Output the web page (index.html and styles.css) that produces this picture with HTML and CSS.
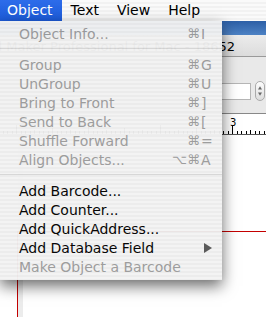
FILE: index.html
```html
<!DOCTYPE html>
<html lang="en">
<head>
    <meta charset="UTF-8">
    <meta name="viewport" content="width=device-width, initial-scale=1.0">
    <title>Object Menu</title>
    <link rel="stylesheet" href="styles.css">
</head>
<body>
    <!-- Menu bar -->
    <div class="menubar">
        <span class="menubar-item first active">Object</span>
        <span class="menubar-item">Text</span>
        <span class="menubar-item">View</span>
        <span class="menubar-item">Help</span>
    </div>

    <!-- Document window behind the menu -->
    <div class="desktop">
        <div class="bluebar"></div>
        <div class="titlebar"><div class="title">Label Maker Professional for Mac - 18652</div></div>
        <div class="toolbar">
            <div class="size-box"></div>
            <div class="stepper">
                <svg width="10" height="20" viewBox="0 0 10 20">
                    <path d="M5 4 L7.5 8 L2.5 8 Z" fill="#666"/>
                    <path d="M5 16 L7.5 12 L2.5 12 Z" fill="#666"/>
                </svg>
            </div>
        </div>
        <svg class="ruler" width="266" height="21" viewBox="0 0 266 21">
            <g stroke="#000" stroke-width="1" id="ticks"></g>
            <text x="230" y="12" font-size="10" font-family="DejaVu Sans, sans-serif">3</text>
            <line x1="0" y1="20.5" x2="266" y2="20.5" stroke="#555"/>
        </svg>
        <div class="canvas">
            <div class="page-strip"></div>
            <div class="margin-guide"></div>
        </div>
    </div>

    <!-- Pulled-down Object menu -->
    <div class="menu">
        <div class="menu-item disabled"><span>Object Info...</span><span class="mods">⌘</span><span class="key">I</span></div>
        <div class="separator"></div>
        <div class="menu-item disabled"><span>Group</span><span class="mods">⌘</span><span class="key">G</span></div>
        <div class="menu-item disabled"><span>UnGroup</span><span class="mods">⌘</span><span class="key">U</span></div>
        <div class="menu-item disabled"><span>Bring to Front</span><span class="mods">⌘</span><span class="key">]</span></div>
        <div class="menu-item disabled"><span>Send to Back</span><span class="mods">⌘</span><span class="key">[</span></div>
        <div class="menu-item disabled"><span>Shuffle Forward</span><span class="mods">⌘</span><span class="key">=</span></div>
        <div class="menu-item disabled"><span>Align Objects...</span><span class="mods">⌥⌘</span><span class="key">A</span></div>
        <div class="separator"></div>
        <div class="menu-item"><span>Add Barcode...</span><span class="mods"></span><span class="key"></span></div>
        <div class="menu-item"><span>Add Counter...</span><span class="mods"></span><span class="key"></span></div>
        <div class="menu-item"><span>Add QuickAddress...</span><span class="mods"></span><span class="key"></span></div>
        <div class="menu-item"><span>Add Database Field</span><span class="mods"></span>
            <span class="key arrow">
                <svg width="8" height="10" viewBox="0 0 8 10"><path d="M0 0 L8 5 L0 10 Z" fill="#555"/></svg>
            </span>
        </div>
        <div class="menu-item disabled"><span>Make Object a Barcode</span><span class="mods"></span><span class="key"></span></div>
    </div>

    <script>
        // ruler ticks: 72px per unit, sixteenths
        const ticks = document.getElementById('ticks');
        for (let i = -60; i < 40; i++) {
            const x = 232 + i * 4.5;
            if (x < 0 || x > 266) continue;
            let h = 3;
            if (i % 16 === 0) h = 9;
            else if (i % 8 === 0) h = 6;
            else if (i % 4 === 0) h = 4;
            const line = document.createElementNS('http://www.w3.org/2000/svg', 'line');
            const px = Math.round(x) + 0.5;
            line.setAttribute('x1', px);
            line.setAttribute('x2', px);
            line.setAttribute('y1', 20 - h);
            line.setAttribute('y2', 20);
            ticks.appendChild(line);
        }
    </script>
</body>
</html>
```

FILE: styles.css
```css
body {
    margin: 0;
    width: 266px;
    height: 317px;
    overflow: hidden;
    position: relative;
    background: #fff;
    font-family: 'DejaVu Sans', 'Noto Sans', sans-serif;
    font-size: 14px;
    color: #000;
}

/* Menu bar */
.menubar {
    height: 21px;
    display: flex;
    background: repeating-linear-gradient(#fafafa 0 2px, #f2f2f2 2px 4px);
    position: relative;
    z-index: 2;
}
.menubar-item {
    height: 21px;
    line-height: 21px;
    padding: 0 9px;
}
.menubar-item.first {
    padding-left: 7px;
}
.menubar-item.active {
    color: #fff;
    background: linear-gradient(#2d6cea, #1c5bd9);
}

/* Background window */
.desktop {
    position: absolute;
    top: 21px;
    left: 0;
    right: 0;
    bottom: 0;
    display: flex;
    flex-direction: column;
}
.bluebar {
    height: 14px;
    flex-shrink: 0;
    background: linear-gradient(#2c5fa6, #4d82c4);
}
.titlebar {
    height: 22px;
    flex-shrink: 0;
    display: flex;
    justify-content: flex-end;
    align-items: flex-end;
    padding: 0 31px 5px 0;
    box-sizing: border-box;
    white-space: nowrap;
    background: linear-gradient(#ececec, #dcdcdc);
    border-bottom: 1px solid #9a9a9a;
}
.title {
    font-size: 13px;
    line-height: 9px;
    flex-shrink: 0;
}
.toolbar {
    height: 57px;
    flex-shrink: 0;
    display: flex;
    justify-content: flex-end;
    align-items: flex-start;
    gap: 4px;
    padding: 24px 1px 0 0;
    box-sizing: border-box;
    background: #e9e9e9;
    border-bottom: 1px solid #888;
}
.size-box {
    width: 50px;
    height: 17px;
    margin-top: 2px;
    background: #fff;
    border: 1px solid #b5b5b5;
    box-sizing: border-box;
}
.stepper {
    width: 10px;
    height: 20px;
    border: 1px solid #aaa;
    border-radius: 5px;
    background: linear-gradient(#fdfdfd, #dcdcdc);
    box-sizing: border-box;
    display: flex;
    align-items: center;
    justify-content: center;
    overflow: hidden;
}
.ruler {
    display: block;
    flex-shrink: 0;
    background: #fff;
}
.canvas {
    flex: 1;
    position: relative;
    background: #fff;
}
.page-strip {
    position: absolute;
    left: 18px;
    top: 0;
    bottom: 0;
    width: 5px;
    background: #ececec;
}
.margin-guide {
    position: absolute;
    left: 17px;
    top: 96px;
    right: 0;
    bottom: 0;
    border-top: 1px solid #c40000;
    border-left: 1px solid #c40000;
}

/* Pull-down menu */
.menu {
    position: absolute;
    top: 21px;
    left: 0;
    width: 222px;
    padding: 3px 0 4px;
    box-sizing: border-box;
    background: repeating-linear-gradient(#f3f3f3 0 2px, #ececec 2px 4px);
    opacity: 0.97;
    box-shadow: 0 6px 14px rgba(0, 0, 0, 0.6);
    z-index: 3;
}
.menu-item {
    display: grid;
    grid-template-columns: 1fr auto 14px;
    align-items: center;
    height: 19px;
    line-height: 16px;
    padding: 0 8px 0 19px;
    white-space: nowrap;
}
.menu-item.disabled {
    color: #9a9a9a;
}
.mods {
    text-align: right;
    font-size: 13px;
}
.key {
    padding-left: 1px;
}
.arrow {
    display: flex;
    align-items: center;
    padding-left: 4px;
}
.separator {
    height: 12px;
    background: linear-gradient(transparent 5px, #d6d6d6 5px 6px, transparent 6px);
}
```
